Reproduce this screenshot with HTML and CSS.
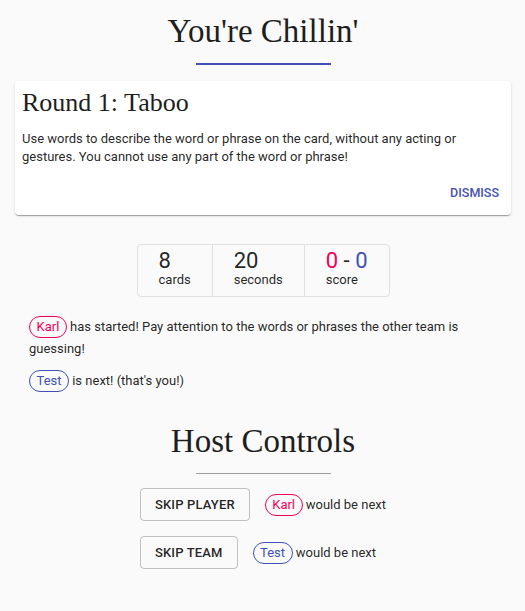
FILE: index.html
```html
<!DOCTYPE html>
<html lang="en">
<head>
<meta charset="utf-8">
<title>You're Chillin'</title>
<link rel="stylesheet" href="styles.css">
</head>
<body>
<div class="page">
  <header class="title-block">
    <h1 class="title">You're Chillin'</h1>
    <div class="rule rule-blue"></div>
  </header>

  <section class="card">
    <h2 class="card-title">Round 1: Taboo</h2>
    <p class="card-text">Use words to describe the word or phrase on the card, without any acting or gestures. You cannot use any part of the word or phrase!</p>
    <div class="card-actions"><button class="text-btn">Dismiss</button></div>
  </section>

  <div class="stats">
    <div class="stat"><div class="num">8</div><div class="label">cards</div></div>
    <div class="stat"><div class="num">20</div><div class="label">seconds</div></div>
    <div class="stat"><div class="num"><span class="red">0</span> - <span class="blue">0</span></div><div class="label">score</div></div>
  </div>

  <div class="messages">
    <p class="msg"><span class="chip chip-red">Karl</span> has started! Pay attention to the words or phrases the other team is guessing!</p>
    <p class="msg msg-next"><span class="chip chip-blue">Test</span> is next! (that's you!)</p>
  </div>

  <h1 class="title title-host">Host Controls</h1>
  <div class="rule rule-gray"></div>

  <div class="controls">
    <div class="control-row">
      <button class="outline-btn">Skip Player</button>
      <span class="next"><span class="chip chip-red">Karl</span> would be next</span>
    </div>
    <div class="control-row">
      <button class="outline-btn">Skip Team</button>
      <span class="next"><span class="chip chip-blue">Test</span> would be next</span>
    </div>
  </div>
</div>
</body>
</html>
```

FILE: styles.css
```css
* { box-sizing: border-box; }

body {
  margin: 0;
  background: #fafafa;
  color: rgba(0, 0, 0, 0.87);
  font-family: Roboto, "Liberation Sans", sans-serif;
}

.page {
  padding: 0 14px 40px 15px;
}

.title {
  margin: 0;
  padding-top: 12px;
  font-family: "Liberation Serif", serif;
  font-weight: 400;
  font-size: 33px;
  line-height: 39px;
  text-align: center;
  color: #1e1e1e;
}

.rule {
  width: 135px;
  margin: 0 auto;
}

.rule-blue {
  margin-top: 12px;
  height: 2px;
  background: #3f51b5;
}

.rule-gray {
  margin-top: 12px;
  height: 1px;
  background: #9e9e9e;
}

.card {
  margin-top: 16px;
  background: #fff;
  border-radius: 4px;
  box-shadow: 0 2px 1px -1px rgba(0,0,0,0.2), 0 1px 1px 0 rgba(0,0,0,0.14), 0 1px 3px 0 rgba(0,0,0,0.12);
  padding: 6px 0 0 0;
}

.card-title {
  margin: 0;
  padding: 0 7px;
  font-family: "Liberation Serif", serif;
  font-weight: 400;
  font-size: 26px;
  line-height: 32px;
  color: #1e1e1e;
}

.card-text {
  margin: 11px 0 0;
  padding: 0 7px;
  font-size: 13px;
  line-height: 18px;
}

.card-actions {
  display: flex;
  justify-content: flex-end;
  padding: 12px 4px 7px 8px;
}

.text-btn {
  border: 0;
  background: none;
  padding: 4px 8px;
  font-family: Roboto, sans-serif;
  font-size: 12.5px;
  font-weight: 500;
  line-height: 22px;
  letter-spacing: 0;
  text-transform: uppercase;
  color: #3f51b5;
}

.stats {
  display: flex;
  width: fit-content;
  margin: 29px auto 0;
  border: 1px solid #e0e0e0;
  border-radius: 4px;
}

.stat {
  padding: 5px 21px 8px 21px;
}

.stat + .stat {
  border-left: 1px solid #e0e0e0;
}

.num {
  font-size: 22px;
  line-height: 22px;
}

.label {
  font-size: 13px;
  line-height: 16px;
}

.red { color: #f50057; }
.blue { color: #3f51b5; }

.messages {
  margin-top: 19px;
  padding-left: 14px;
  padding-right: 10px;
}

.msg {
  margin: 0;
  font-size: 13px;
  line-height: 21px;
}

.msg-next {
  margin-top: 11px;
}

.chip {
  display: inline-block;
  padding: 0 6.5px;
  border: 1px solid;
  border-radius: 11px;
  font-size: 13px;
  line-height: 20px;
}

.chip-red {
  color: #f50057;
  border-color: #f50057;
}

.chip-blue {
  color: #3f51b5;
  border-color: #3f51b5;
}

.title-host {
  margin-top: 30px;
  padding-top: 0;
}

.controls {
  display: flex;
  flex-direction: column;
  align-items: flex-start;
  gap: 15px;
  width: fit-content;
  margin: 14px auto 0;
}

.control-row {
  display: flex;
  align-items: center;
  gap: 15px;
}

.outline-btn {
  background: transparent;
  border: 1px solid rgba(0, 0, 0, 0.23);
  border-radius: 4px;
  padding: 4px 14px;
  font-family: Roboto, sans-serif;
  font-size: 13px;
  font-weight: 500;
  line-height: 23px;
  letter-spacing: 0.15px;
  text-transform: uppercase;
  color: rgba(0, 0, 0, 0.87);
}

.next {
  font-size: 13px;
  line-height: 21px;
}
```
